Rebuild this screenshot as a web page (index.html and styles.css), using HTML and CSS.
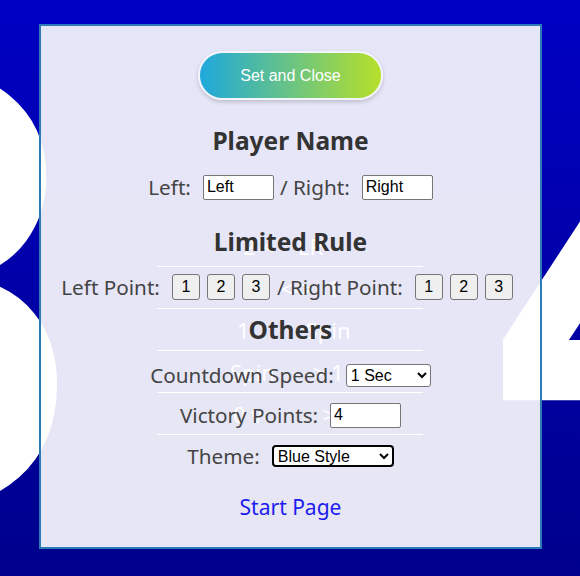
FILE: index.html
```html
<!DOCTYPE html>
<html>
<head>
<meta charset="utf-8">
<link rel="stylesheet" href="styles.css">
</head>
<body>
<div class="board">
  <span class="score score-left">8</span>
  <span class="score score-right">4</span>
  <table class="ghost">
    <tr><td class="r0">2 &lt;<span class="gr g0">LR</span></td></tr>
    <tr><td class="r1">&lt;-&gt;<span class="gr g1">1</span></td></tr>
    <tr><td class="r2">1<span class="gr g2">Spin</span></td></tr>
    <tr><td class="r3">Spin<span class="gr g3">&gt; 1</span></td></tr>
    <tr><td class="r4">0 v<span class="gr g4">&gt;</span></td></tr>
  </table>
</div>
<div class="panel">
  <button class="close-btn">Set and Close</button>
  <h2 class="title t-player">Player Name</h2>
  <div class="row r-names">
    <label>Left:</label><input class="txt" type="text" value="Left">
    <span class="sep">/ Right:</span><input class="txt" type="text" value="Right">
  </div>
  <h2 class="title t-limited">Limited Rule</h2>
  <div class="row r-points">
    <label>Left Point:</label>
    <button class="num">1</button><button class="num">2</button><button class="num">3</button>
    <span class="sep">/ Right Point:</span>
    <button class="num">1</button><button class="num">2</button><button class="num">3</button>
  </div>
  <h2 class="title t-others">Others</h2>
  <div class="row r-speed">
    <label>Countdown Speed:</label>
    <select class="sel sel-speed"><option>1 Sec</option><option>2 Sec</option></select>
  </div>
  <div class="row r-victory">
    <label>Victory Points:</label><input class="txt" type="text" value="4">
  </div>
  <div class="row r-theme">
    <label>Theme:</label>
    <select class="sel sel-theme"><option>Blue Style</option><option>Red Style</option></select>
  </div>
  <a class="start-link" href="#">Start Page</a>
</div>
</body>
</html>
```
FILE: styles.css
```css
html, body {
  margin: 0;
  padding: 0;
}
body {
  width: 580px;
  height: 576px;
  overflow: hidden;
  position: relative;
  background: linear-gradient(#0000c4, #00008c);
  font-family: "Noto Sans", "Open Sans", sans-serif;
}
.board {
  position: relative;
  height: 576px;
  overflow: hidden;
}
.score {
  position: absolute;
  font-family: "Liberation Sans", Arial, sans-serif;
  font-size: 590px;
  line-height: 1;
  color: #fff;
}
.score-left {
  font-size: 630px;
  left: -266px;
  top: -28px;
}
.score-right {
  left: 494px;
  top: -16px;
  font-weight: bold;
}
.ghost {
  position: relative;
  margin: 225px auto 0;
  width: 266px;
  border-collapse: collapse;
  color: #fff;
  font-size: 22px;
}
.ghost td {
  height: 41px;
  padding: 0;
  border-bottom: 1px solid #fff;
  text-align: left;
  white-space: pre;
  vertical-align: middle;
}
.ghost .r0 { padding-left: 86px; }
.ghost .r1 { padding-left: 124px; }
.ghost .r2 { padding-left: 80px; }
.ghost .r3 { padding-left: 73px; }
.ghost .r4 { padding-left: 76px; }
.gr { display: inline-block; }
.g0 { margin-left: 24px; }
.g1 { margin-left: 14px; }
.g2 { margin-left: 56px; }
.g3 { margin-left: 38px; }
.g4 { margin-left: 60px; }

.panel {
  position: absolute;
  left: 39px;
  top: 24px;
  width: 499px;
  height: 521px;
  border: 2px solid #2c7bb6;
  background: rgba(255, 255, 255, 0.9);
  display: flex;
  flex-direction: column;
  align-items: center;
  color: #404040;
}
.close-btn {
  margin-top: 25px;
  width: 185px;
  height: 49px;
  border: 2px solid #f4f4fb;
  border-radius: 25px;
  background: linear-gradient(to right, #1ea8dc, #b6e02a);
  color: #fff;
  font-family: "Liberation Sans", Arial, sans-serif;
  font-size: 16px;
  box-shadow: 0 2px 4px rgba(0, 0, 0, 0.18);
  padding: 0;
}
.title {
  margin: 0;
  height: 30px;
  line-height: 30px;
  font-size: 24.5px;
  font-weight: bold;
  color: #333;
}
.t-player { margin-top: 26px; }
.t-limited { margin-top: 20px; }
.t-others { margin-top: 8px; }
.row {
  height: 40px;
  display: flex;
  align-items: center;
  justify-content: center;
  font-size: 20.7px;
  color: #444;
}
.row label { margin-right: 12px; }
.sep { margin: 0 12px 0 6px; }
.r-names { margin-top: 11px; }
.r-points { margin-top: 10px; }
.r-speed { margin-top: 10px; }
.r-victory { margin-top: 0; }
.r-theme { margin-top: 1px; }
.txt {
  box-sizing: border-box;
  width: 71px;
  height: 25px;
  border: 1px solid #767676;
  border-radius: 2px;
  padding: 1px 3px;
  font-family: "Liberation Sans", Arial, sans-serif;
  font-size: 16px;
  color: #000;
  background: #fff;
}
.num {
  box-sizing: border-box;
  width: 28px;
  height: 26px;
  margin-right: 7px;
  padding: 0;
  border: 1px solid #767676;
  border-radius: 3px;
  background: #efefef;
  font-family: "Liberation Sans", Arial, sans-serif;
  font-size: 16px;
  color: #000;
}
.r-points label { margin-right: 12px; }
.r-points .sep { margin: 0 12px 0 0; }
.sel {
  box-sizing: border-box;
  height: 23px;
  font-family: "Liberation Sans", Arial, sans-serif;
  font-size: 16px;
  color: #000;
  background: #fff;
  border: 1px solid #767676;
  border-radius: 3px;
}
.sel-speed { width: 85px; }
.sel-theme {
  width: 122px;
  height: 22px;
  border: 2px solid #000;
  border-radius: 4px;
}
.start-link {
  margin-top: 16px;
  line-height: 30px;
  font-size: 21px;
  color: #1c1cf0;
  text-decoration: none;
}
```
